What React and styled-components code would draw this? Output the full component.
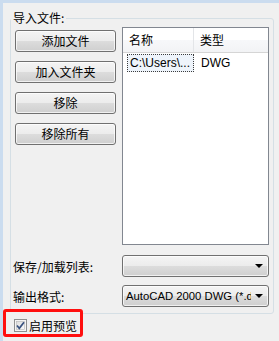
import React from 'react';
import styled, { createGlobalStyle } from 'styled-components';

const Global = createGlobalStyle`
  html, body { margin: 0; padding: 0; background: #f0f0f0; }
  body {
    font-family: "Noto Sans CJK SC", "Noto Sans", sans-serif;
    font-size: 12px;
    color: #000;
  }
  * { box-sizing: border-box; }
`;

const Window = styled.div`
  width: 279px;
  height: 341px;
  border-top: 3px solid #cbdcef;
  border-left: 3px solid #cbdcef;
  background: #f0f0f0;
  display: flex;
  flex-direction: column;
  overflow: hidden;
`;

const Group = styled.fieldset`
  margin: 7px 5px 0 7px;
  padding: 1px 4px 6px 4px;
  border: 1px solid #d5dfe5;
  border-radius: 3px;
  min-width: 0;
`;

const Legend = styled.legend`
  font-size: 12px;
  line-height: 16px;
  padding: 0 2px;
  margin-left: -4px;
`;

const MainRow = styled.div`
  display: grid;
  grid-template-columns: 102px 147px;
  column-gap: 5px;
`;

const ButtonColumn = styled.div`
  display: flex;
  flex-direction: column;
  gap: 9px;
  padding-top: 3px;
`;

const Button = styled.button`
  height: 22px;
  width: 101px;
  padding: 0;
  font-family: "Noto Sans CJK SC", sans-serif;
  font-size: 12px;
  color: #000;
  border: 1px solid #707070;
  border-radius: 3px;
  background: linear-gradient(to bottom, #f4f4f4 0%, #ececec 48%, #dcdcdc 52%, #cfcfcf 100%);
  box-shadow: inset 0 0 0 1px rgba(255, 255, 255, 0.7);
  line-height: 18px;
`;

const ListBox = styled.div`
  height: 218px;
  border: 1px solid #828790;
  background: #fff;
  display: flex;
  flex-direction: column;
`;

const ListHeader = styled.div`
  display: grid;
  grid-template-columns: 71px 1fr;
  height: 25px;
  border-bottom: 1px solid #d5d5d5;
  background: linear-gradient(to bottom, #ffffff 0%, #ffffff 50%, #f7f8fa 51%, #f2f3f5 100%);
`;

const HeaderCell = styled.div`
  padding-left: 6px;
  line-height: 23px;
  border-right: ${p => (p.$divider ? '1px solid #e3e5e8' : 'none')};
`;

const ListRow = styled.div`
  display: grid;
  grid-template-columns: 71px 1fr;
  height: 18px;
  margin-top: 1px;
  align-items: center;
`;

const Cell = styled.div`
  font-family: "Liberation Sans", Arial, sans-serif;
  font-size: 12px;
  line-height: 16px;
  height: 18px;
  padding-left: ${p => (p.$selected ? '2px' : '6px')};
  margin-left: ${p => (p.$selected ? '4px' : '0')};
  border: ${p => (p.$selected ? '1px dotted #3c3c3c' : '1px solid transparent')};
  background: ${p => (p.$selected ? '#eef4fb' : 'transparent')};
  white-space: nowrap;
  overflow: hidden;
`;

const FieldRow = styled.div`
  display: grid;
  grid-template-columns: 107px 147px;
  align-items: center;
  margin-top: ${p => p.$top}px;
`;

const Label = styled.div`
  margin-left: -2px;
  font-size: 12px;
`;

const Combo = styled.div`
  height: 22px;
  border: 1px solid #707070;
  border-radius: 3px;
  background: linear-gradient(to bottom, #f4f4f4 0%, #ececec 48%, #dcdcdc 52%, #cfcfcf 100%);
  box-shadow: inset 0 0 0 1px rgba(255, 255, 255, 0.7);
  display: flex;
  align-items: center;
`;

const ComboText = styled.div`
  flex: 1;
  min-width: 0;
  overflow: hidden;
  white-space: nowrap;
  font-family: "Liberation Sans", Arial, sans-serif;
  font-size: 11.3px;
  line-height: 20px;
  padding-left: 3px;
  margin-right: 2px;
`;

const Arrow = styled.div`
  width: 15px;
  display: flex;
  justify-content: center;
  flex-shrink: 0;
  padding-right: 4px;
  &::before {
    content: '';
    border-left: 4px solid transparent;
    border-right: 4px solid transparent;
    border-top: 4px solid #000;
  }
`;

const PreviewRow = styled.label`
  position: relative;
  z-index: 1;
  margin-top: -5px;
  width: 80px;
  height: 28px;
  border: 3px solid #ff0f0f;
  border-radius: 3px;
  background: #f0f0f0;
  display: flex;
  align-items: center;
  gap: 2px;
  padding-left: 8px;
  padding-top: 4px;
  font-size: 12px;
`;

const CheckBox = () => (
  <svg width="13" height="13" viewBox="0 0 13 13">
    <defs>
      <linearGradient id="cbg" x1="0" y1="0" x2="1" y2="1">
        <stop offset="0" stopColor="#dcdcdc" />
        <stop offset="1" stopColor="#fbfbfb" />
      </linearGradient>
    </defs>
    <rect x="0.5" y="0.5" width="12" height="12" fill="#f4f4f4" stroke="#8e8f8f" />
    <rect x="2.5" y="2.5" width="8" height="8" fill="url(#cbg)" stroke="#b6b6b6" strokeWidth="0.6" />
    <path d="M3 6.5 L5.3 9.3 L10 3.2" fill="none" stroke="#39527f" strokeWidth="1.7" />
  </svg>
);

export default function App() {
  return (
    <>
      <Global />
      <Window>
        <Group>
          <Legend>导入文件:</Legend>
          <MainRow>
            <ButtonColumn>
              <Button>添加文件</Button>
              <Button>加入文件夹</Button>
              <Button>移除</Button>
              <Button>移除所有</Button>
            </ButtonColumn>
            <ListBox>
              <ListHeader>
                <HeaderCell $divider>名称</HeaderCell>
                <HeaderCell>类型</HeaderCell>
              </ListHeader>
              <ListRow>
                <Cell $selected>C:\Users\...</Cell>
                <Cell>DWG</Cell>
              </ListRow>
            </ListBox>
          </MainRow>
          <FieldRow $top={10}>
            <Label>保存/加载列表:</Label>
            <Combo>
              <ComboText></ComboText>
              <Arrow />
            </Combo>
          </FieldRow>
          <FieldRow $top={8}>
            <Label>输出格式:</Label>
            <Combo>
              <ComboText>AutoCAD 2000 DWG (*.dwg)</ComboText>
              <Arrow />
            </Combo>
          </FieldRow>
        </Group>
        <PreviewRow>
          <CheckBox />
          <span>启用预览</span>
        </PreviewRow>
      </Window>
    </>
  );
}
